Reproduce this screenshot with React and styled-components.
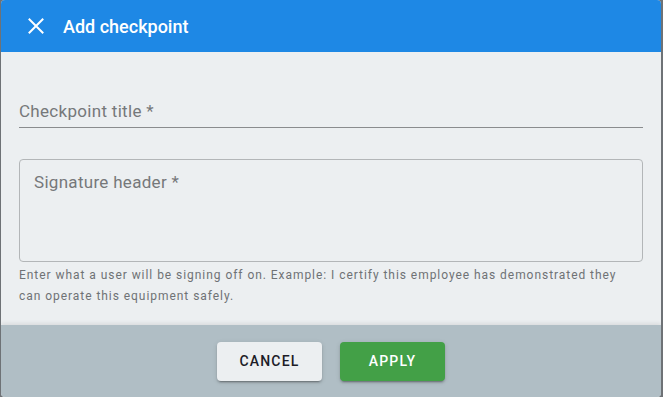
import React from "react";
import styled, { createGlobalStyle } from "styled-components";

const Global = createGlobalStyle`
  html, body { margin: 0; padding: 0; }
  body {
    background: #6e7276;
    font-family: Roboto, "Noto Sans", Arial, sans-serif;
    overflow: hidden;
  }
`;

const Backdrop = styled.div`
  width: 663px;
  height: 397px;
  display: flex;
  padding-left: 1px;
  box-sizing: border-box;
`;

const Dialog = styled.div`
  width: 660px;
  height: 397px;
  display: flex;
  flex-direction: column;
  background: #eceff1;
  border-radius: 4px;
  overflow: hidden;
`;

const Header = styled.div`
  height: 52px;
  flex: none;
  background: #1e88e5;
  display: flex;
  align-items: center;
  padding-left: 26px;
  gap: 18px;
  color: #ffffff;
`;

const CloseButton = styled.button`
  border: none;
  background: transparent;
  padding: 0;
  width: 18px;
  height: 18px;
  display: flex;
  align-items: center;
  justify-content: center;
  cursor: pointer;
  color: #ffffff;
`;

const Title = styled.h2`
  margin: 0;
  font-family: Roboto, sans-serif;
  font-weight: 500;
  font-size: 18px;
  letter-spacing: 0;
`;

const Body = styled.div`
  flex: 1;
  display: flex;
  flex-direction: column;
  padding: 0 18px;
`;

const UnderlineField = styled.div`
  margin-top: 48px;
  height: 28px;
  border-bottom: 1px solid #8a8c8e;
  display: flex;
  align-items: flex-end;
  padding-bottom: 6px;
  box-sizing: border-box;
`;

const FieldLabel = styled.span`
  font-family: Roboto, sans-serif;
  font-size: 17px;
  letter-spacing: 0.3px;
  color: #76787a;
  line-height: 20px;
`;

const OutlinedField = styled.div`
  margin-top: 31px;
  height: 103px;
  border: 1px solid #b3b6b8;
  border-radius: 4px;
  box-sizing: border-box;
  padding: 12px 14px;
`;

const Helper = styled.p`
  margin: 3px 0 0;
  padding-right: 20px;
  font-family: Roboto, sans-serif;
  font-size: 12px;
  line-height: 21px;
  letter-spacing: 0.95px;
  color: #6f7275;
`;

const Footer = styled.div`
  height: 72px;
  flex: none;
  background: #b0bec5;
  box-shadow: 0 -2px 4px rgba(0, 0, 0, 0.08);
  display: flex;
  align-items: center;
  justify-content: center;
  gap: 18px;
  position: relative;
`;

const Button = styled.button`
  width: 105px;
  height: 39px;
  border: none;
  border-radius: 4px;
  font-family: Roboto, sans-serif;
  font-weight: 500;
  font-size: 14px;
  letter-spacing: 1.2px;
  text-transform: uppercase;
  cursor: pointer;
  background: ${(p) => (p.$primary ? "#43a047" : "#eceff1")};
  color: ${(p) => (p.$primary ? "#ffffff" : "#1c1c28")};
  box-shadow: 0 3px 1px -2px rgba(0,0,0,0.2), 0 2px 2px 0 rgba(0,0,0,0.14), 0 1px 5px 0 rgba(0,0,0,0.12);
`;

export default function App() {
  return (
    <>
      <Global />
      <Backdrop>
        <Dialog>
          <Header>
            <CloseButton aria-label="close">
              <svg width="18" height="18" viewBox="0 0 18 18">
                <path d="M2.5 2.5 L15.5 15.5 M15.5 2.5 L2.5 15.5" stroke="#ffffff" strokeWidth="2" strokeLinecap="square" />
              </svg>
            </CloseButton>
            <Title>Add checkpoint</Title>
          </Header>
          <Body>
            <UnderlineField>
              <FieldLabel>Checkpoint title *</FieldLabel>
            </UnderlineField>
            <OutlinedField>
              <FieldLabel>Signature header *</FieldLabel>
            </OutlinedField>
            <Helper>
              Enter what a user will be signing off on. Example: I certify this employee has demonstrated they can operate this equipment safely.
            </Helper>
          </Body>
          <Footer>
            <Button>Cancel</Button>
            <Button $primary>Apply</Button>
          </Footer>
        </Dialog>
      </Backdrop>
    </>
  );
}
